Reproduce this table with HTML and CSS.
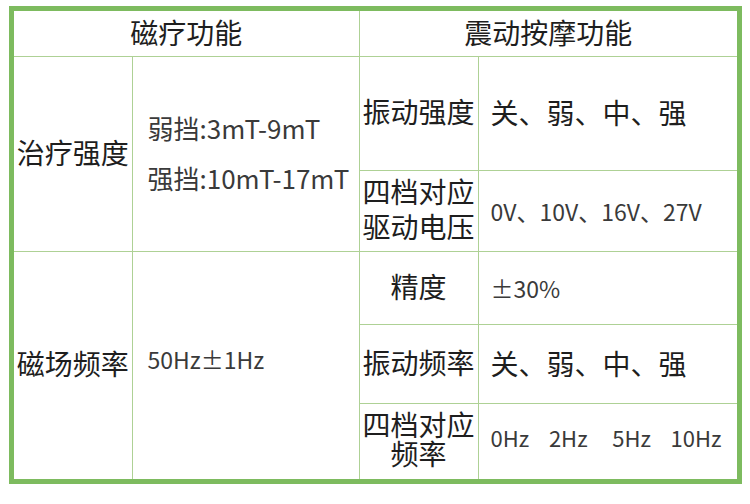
FILE: index.html
```html
<!DOCTYPE html>
<html lang="zh-CN">
<head>
<meta charset="utf-8">
<link rel="stylesheet" href="styles.css">
</head>
<body>
<div class="frame">
<table class="spec">
<colgroup>
<col class="c1"><col class="c2"><col class="c3"><col class="c4">
</colgroup>
<tr class="r0">
<th colspan="2" class="head">磁疗功能</th>
<th colspan="2" class="head">震动按摩功能</th>
</tr>
<tr class="r1">
<td rowspan="2" class="label">治疗强度</td>
<td rowspan="2" class="val2 tall">弱挡:3mT-9mT<br>强挡:10mT-17mT</td>
<td class="label">振动强度</td>
<td class="val4 big">关、弱、中、强</td>
</tr>
<tr class="r2">
<td class="label lh35">四档对应<br>驱动电压</td>
<td class="val4">0V、10V、16V、27V</td>
</tr>
<tr class="r3">
<td rowspan="3" class="label">磁场频率</td>
<td rowspan="3" class="val2 small">50Hz±1Hz</td>
<td class="label">精度</td>
<td class="val4">±30%</td>
</tr>
<tr class="r4">
<td class="label">振动频率</td>
<td class="val4 big">关、弱、中、强</td>
</tr>
<tr class="r5">
<td class="label lh29">四档对应<br>频率</td>
<td class="val4 hz">0Hz&nbsp;&nbsp;&nbsp;&nbsp;2Hz&nbsp;&nbsp;&nbsp;&nbsp;&nbsp;5Hz&nbsp;&nbsp;&nbsp;&nbsp;10Hz</td>
</tr>
</table>
</div>
</body>
</html>
```
FILE: styles.css
```css
html, body {
  margin: 0;
  padding: 0;
  background: #ffffff;
}
body {
  padding: 6px 0 0 9px;
  font-family: "Noto Sans CJK SC", "Noto Sans", sans-serif;
  color: #1e1e1e;
}
.frame {
  width: 723px;
  height: 468px;
  border: 5px solid #7dbb5f;
}
.spec {
  width: 723px;
  height: 468px;
  border-collapse: collapse;
  border-style: hidden;
  table-layout: fixed;
}
.c1 { width: 118px; }
.c2 { width: 227px; }
.c3 { width: 119px; }
.c4 { width: 259px; }
.spec th, .spec td {
  border: 1px solid #aed195;
  padding: 0;
  vertical-align: middle;
}
.r0 { height: 45px; }
.r1 { height: 114px; }
.r2 { height: 81px; }
.r3 { height: 73px; }
.r4 { height: 79px; }
.r5 { height: 76px; }
.spec .head {
  font-weight: normal;
  font-size: 28px;
  line-height: 36px;
  text-align: center;
  color: #1e1e1e;
  padding-bottom: 2px;
}
.spec .label {
  font-size: 28px;
  line-height: 34px;
  text-align: center;
  white-space: nowrap;
  color: #1e1e1e;
  padding-bottom: 4px;
}
.spec .lh35 { line-height: 35px; }
.spec .lh29 { line-height: 29px; }
.spec .val2 {
  padding-left: 15px;
  font-size: 26px;
  color: #3a3a3a;
  white-space: nowrap;
}
.spec .val2.tall {
  line-height: 50px;
  padding-bottom: 2px;
}
.spec .val2.small {
  font-size: 23px;
  padding-bottom: 12px;
}
.spec .val4 {
  padding-left: 12px;
  font-size: 23px;
  color: #3a3a3a;
  white-space: nowrap;
}
.spec .val4.big {
  font-size: 28px;
  color: #1e1e1e;
  padding-bottom: 2px;
}
.spec .val4.hz {
  font-size: 22px;
  padding-bottom: 8px;
}
```
